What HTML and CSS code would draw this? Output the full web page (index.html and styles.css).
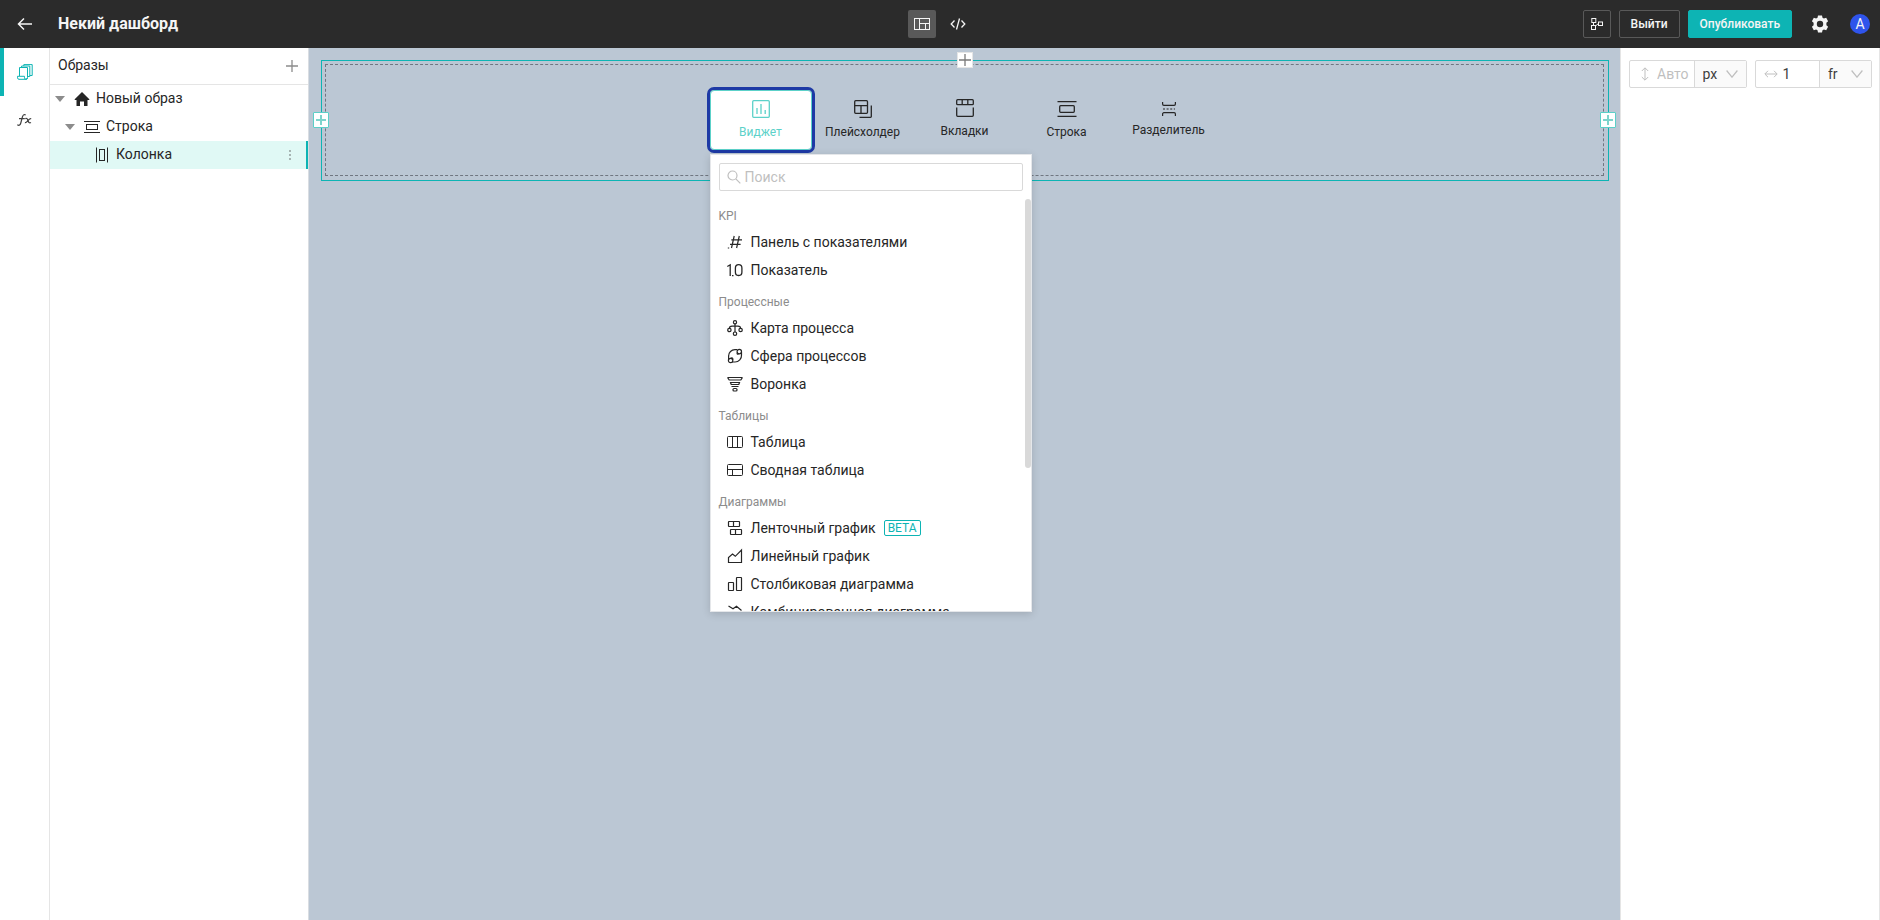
FILE: index.html
```html
<!DOCTYPE html>
<html lang="ru">
<head>
<meta charset="utf-8">
<title>Некий дашборд</title>
<link rel="stylesheet" href="styles.css">
</head>
<body>
<div class="app">
  <header class="topbar">
    <div class="topbar-left">
      <button class="ghost back" aria-label="Назад"><svg width="16" height="14" viewBox="0 0 16 14" fill="none" stroke="currentColor" stroke-width="1.5"><path d="M15 7H2M7 1.500L1.500 7L7 12.500"/></svg></button>
      <h1 class="title">Некий дашборд</h1>
    </div>
    <div class="topbar-center">
      <button class="mode mode-active" aria-label="Макет"><svg width="16" height="12" viewBox="0 0 16 12" fill="none" stroke="currentColor"><rect x=".5" y=".5" width="15" height="11"/><path d="M5.500 .5V11.500M5.500 5.500H15.500M11.500 5.500V11.500"/></svg></button>
      <button class="mode" aria-label="Код"><svg width="16" height="12" viewBox="0 0 16 12" fill="none" stroke="currentColor" stroke-width="1.300"><path d="M4.500 2.500L1.200 6L4.500 9.500M11.500 2.500L14.800 6L11.500 9.500M9.500 .5L6.500 11.500"/></svg></button>
    </div>
    <div class="topbar-right">
      <button class="btn btn-icon" aria-label="Связи"><svg width="12" height="12" viewBox="0 0 12 12" fill="none" stroke="currentColor"><rect x=".8" y=".5" width="4" height="4"/><rect x=".5" y="7.500" width="4" height="4"/><rect x="7.500" y="4" width="4" height="3.500"/><path d="M2.500 4.500V7.500M4.500 8L7.500 5.500"/></svg></button>
      <button class="btn">Выйти</button>
      <button class="btn btn-primary">Опубликовать</button>
      <button class="ghost gear" aria-label="Настройки"><svg width="18" height="18" viewBox="0 0 18 18" fill="currentColor" fill-rule="evenodd"><path d="M7 .5h4l.5 2.300 1.400.8 2.300-.8 1.900 3.400-1.700 1.600v2.400l1.700 1.600-1.900 3.400-2.300-.8-1.400.8-.5 2.300H7l-.5-2.300-1.400-.8-2.300.8-1.900-3.400 1.700-1.600V7.800L.9 6.200l1.900-3.400 2.300.8 1.400-.8zM9 5.800a3.200 3.200 0 1 0 0 6.400a3.200 3.200 0 1 0 0-6.400z"/></svg></button>
      <span class="avatar">A</span>
    </div>
  </header>

  <div class="workspace">
    <nav class="rail">
      <button class="rail-item rail-active" aria-label="Образы"><svg width="16" height="16" viewBox="0 0 16 16" fill="none" stroke="currentColor"><path d="M2.500 12V3.500H10.500V13.500A1.800 1.800 0 0 1 8.700 15.300H2A1.600 1.600 0 0 1 .5 13.800V12.300H7.500V13.800A1.500 1.500 0 0 0 10.500 13.800M4.600 3.500V2H12.800V12.500H10.500M6.800 2V.6H15.200V11.500H12.800"/></svg></button>
      <button class="rail-item" aria-label="Формулы"><svg width="15" height="12" viewBox="0 0 15 12" fill="none" stroke="currentColor" stroke-width="1.200"><path d="M.3 10.800C2.300 12 3.300 11 3.800 9L5.400 3C5.900 1 7 0 8.700 1M2 4.600H7.800M8.300 4.600C10 3.900 10.300 4.800 10.900 6.500S12.200 9.400 14 8.500M14.200 4.600C12.500 4.300 12 5.500 10.900 6.700S9.300 9.100 7.900 8.600"/></svg></button>
    </nav>

    <aside class="outline">
      <div class="outline-head"><span>Образы</span><button class="ghost add" aria-label="Добавить"><svg width="12" height="12" viewBox="0 0 12 12" stroke="currentColor" stroke-width="1.300"><path d="M6 0V12M0 6H12"/></svg></button></div>
      <div class="tree" role="tree">
        <div class="node" role="treeitem"><svg class="caret" width="10" height="6" viewBox="0 0 10 6"><path d="M0 0H10L5 6z" fill="currentColor"/></svg><svg class="home" width="16" height="16" viewBox="0 0 16 16"><path d="M8 1L15.300 8.200V9H13.500V15H10V10.500H6V15H2.500V9H.7V8.200z" fill="currentColor"/></svg><span>Новый образ</span></div>
        <div class="node node-2" role="treeitem"><svg class="caret" width="10" height="6" viewBox="0 0 10 6"><path d="M0 0H10L5 6z" fill="currentColor"/></svg><svg class="row-icon" width="16" height="12" viewBox="0 0 16 12" fill="none" stroke="currentColor"><path d="M0 .5H16M0 11.500H16"/><rect x="2.500" y="3.500" width="11" height="5"/></svg><span>Строка</span></div>
        <div class="node node-3" role="treeitem" aria-selected="true"><svg class="col-icon" width="12" height="16" viewBox="0 0 12 16" fill="none" stroke="currentColor"><path d="M.5 .5V15.500M11.500 .5V15.500"/><rect x="3.500" y="2.500" width="5" height="11"/></svg><span>Колонка</span><button class="ghost more" aria-label="Меню"><svg width="2" height="10" viewBox="0 0 2 10" fill="currentColor"><path d="M0 0h2v2H0zM0 4h2v2H0zM0 8h2v2H0z"/></svg></button></div>
      </div>
    </aside>

    <main class="canvas">
      <section class="row-frame">
        <button class="plus plus-top" aria-label="Добавить строку"><svg width="12" height="12" viewBox="0 0 12 12" stroke="currentColor" stroke-width="1.300"><path d="M6 0V12M0 6H12"/></svg></button>
        <button class="plus plus-left" aria-label="Добавить слева"><svg width="12" height="12" viewBox="0 0 12 12" stroke="currentColor" stroke-width="2"><path d="M6 1V11M1 6H11"/></svg></button>
        <button class="plus plus-right" aria-label="Добавить справа"><svg width="12" height="12" viewBox="0 0 12 12" stroke="currentColor" stroke-width="2"><path d="M6 1V11M1 6H11"/></svg></button>
        <div class="cell">
          <div class="tools">
            <div class="tool-wrap">
              <button class="tool tool-active"><svg width="18" height="18" viewBox="0 0 18 18" fill="none" stroke="currentColor" stroke-width="1.300"><rect x=".7" y=".7" width="16.600" height="16.600" rx="1"/><path d="M5 8V14M9 4V14M13.200 10V14"/></svg>Виджет</button>
              <div class="menu">
                <label class="search"><svg width="14" height="14" viewBox="0 0 14 14" fill="none" stroke="currentColor" stroke-width="1.200"><circle cx="5.500" cy="5.500" r="4.500"/><path d="M8.800 8.800L13.300 13.300"/></svg><input type="text" placeholder="Поиск" aria-label="Поиск"></label>
                <div class="list">
                  <h2>KPI</h2>
                  <button class="entry"><svg width="16" height="16" viewBox="0 0 16 16" fill="none" stroke="currentColor" stroke-width="1.200"><path d="M7.200 2L4.500 14M12.300 2L9.600 14M4.300 5.800H15M3 10.300H13.600M.8 14H2.200"/></svg>Панель с показателями</button>
                  <button class="entry"><svg width="16" height="16" viewBox="0 0 16 16" fill="none" stroke="currentColor" stroke-width="1.300"><path d="M.3 4.500L3.200 2.800V14M5 13.600H6.500"/><rect x="8.400" y="2.700" width="6.500" height="10.800" rx="3.200"/></svg>Показатель</button>
                  <h2>Процессные</h2>
                  <button class="entry"><svg width="16" height="16" viewBox="0 0 16 16" fill="none" stroke="currentColor" stroke-width="1.200"><circle cx="8" cy="2.300" r="1.600"/><circle cx="8" cy="13.700" r="1.700"/><circle cx="2.400" cy="10" r="1.700"/><circle cx="13.600" cy="10" r="1.700"/><path d="M8 4V12M2.400 8.300C2.400 6.700 3.500 6.200 5 6.200H11C12.500 6.200 13.600 6.700 13.600 8.300"/></svg>Карта процесса</button>
                  <button class="entry"><svg width="16" height="16" viewBox="0 0 16 16" fill="none" stroke="currentColor" stroke-width="1.200"><circle cx="12.300" cy="3.600" r="2.200"/><circle cx="3.600" cy="12.500" r="2.200"/><path d="M10.300 1.700H8A6.300 6.300 0 0 0 1.600 8V11.500M14.500 4V7A6.500 6.500 0 0 1 8 14H5M10.300 4.700C9.700 5.900 10.400 6.500 11.800 5.800M3.700 10.300C5 9.500 6.200 10 5.800 11.700"/></svg>Сфера процессов</button>
                  <button class="entry"><svg width="16" height="16" viewBox="0 0 16 16" fill="none" stroke="currentColor" stroke-width="1.200"><path d="M1 1.500H15V2.200L13.800 4H2.200L1 2.200zM3.500 6.500H12.500L11.800 8.500H4.200zM4.500 10.500H11.500"/><rect x="6" y="12.500" width="4" height="2.500" rx="1"/></svg>Воронка</button>
                  <h2>Таблицы</h2>
                  <button class="entry"><svg width="16" height="16" viewBox="0 0 16 16" fill="none" stroke="currentColor"><rect x=".5" y="2.500" width="15" height="11" rx="1"/><path d="M5.500 2.500V13.500M10.500 2.500V13.500"/></svg>Таблица</button>
                  <button class="entry"><svg width="16" height="16" viewBox="0 0 16 16" fill="none" stroke="currentColor"><rect x=".5" y="2.500" width="15" height="11" rx="1"/><path d="M.5 7.500H15.500M5.500 7.500V13.500"/></svg>Сводная таблица</button>
                  <h2>Диаграммы</h2>
                  <button class="entry"><svg width="16" height="16" viewBox="0 0 16 16" fill="none" stroke="currentColor" stroke-width="1.200"><rect x="1.500" y="1.500" width="11" height="5" rx=".5"/><rect x="3.500" y="9.500" width="11" height="5" rx=".5"/><path d="M6.500 1.500V6.500M8.500 9.500V14.500"/></svg>Ленточный график<span class="beta">BETA</span></button>
                  <button class="entry"><svg width="16" height="16" viewBox="0 0 16 16" fill="none" stroke="currentColor" stroke-width="1.200"><path d="M1.500 14.500V9.500L5.500 6L8.300 8.300L14.500 2V14.500z"/></svg>Линейный график</button>
                  <button class="entry"><svg width="16" height="16" viewBox="0 0 16 16" fill="none" stroke="currentColor" stroke-width="1.200"><rect x="1.500" y="6.500" width="5" height="8" rx=".5"/><rect x="9.500" y="1.500" width="5" height="13" rx=".5"/></svg>Столбиковая диаграмма</button>
                  <button class="entry"><svg width="16" height="16" viewBox="0 0 16 16" fill="none" stroke="currentColor" stroke-width="1.200"><path d="M1.500 2L6 4.800L9.500 2.200L14.500 6.500M1.500 14.500V9H5.500V14.500zM9.500 14.500V9H14.500V14.500z"/></svg>Комбинированная диаграмма</button>
                </div>
                <span class="thumb"></span>
              </div>
            </div>
            <button class="tool"><svg width="18" height="18" viewBox="0 0 18 18" fill="none" stroke="currentColor" stroke-width="1.300"><rect x=".7" y=".7" width="12.800" height="12.600" rx="1"/><path d="M.7 5.700H13.500M7 5.700V13.300M17.300 5.500V16.500A.8 .8 0 0 1 16.500 17.300H5.500"/></svg>Плейсхолдер</button>
            <button class="tool tool-tight"><svg width="18" height="18" viewBox="0 0 18 18" fill="none" stroke="currentColor" stroke-width="1.300"><rect x=".7" y=".7" width="16.600" height="5" rx="1"/><path d="M6.200 .7V5.700M11.800 .7V5.700M.7 8.500V16.300A1 1 0 0 0 1.700 17.300H16.300A1 1 0 0 0 17.300 16.300V8.500"/></svg>Вкладки</button>
            <button class="tool"><svg width="20" height="18" viewBox="0 0 20 18" fill="none" stroke="currentColor" stroke-width="1.300"><path d="M.5 1.700H19.500M.5 16.300H19.500"/><rect x="2.700" y="5.700" width="14.600" height="6.600" rx="1"/></svg>Строка</button>
            <button class="tool"><svg width="14" height="14" viewBox="0 0 14 14" fill="none" stroke="currentColor" stroke-width="1.200"><path d="M.6 0V2A1.300 1.300 0 0 0 1.900 3.300H12.100A1.300 1.300 0 0 0 13.400 2V0M.6 14V12A1.300 1.300 0 0 1 1.900 10.700H12.100A1.300 1.300 0 0 1 13.400 12V14"/><path d="M1 7H13" stroke-dasharray="2 1.600"/></svg>Разделитель</button>
          </div>
        </div>
      </section>
    </main>

    <aside class="props">
      <div class="size">
        <label class="size-field"><svg width="8" height="14" viewBox="0 0 8 14" fill="none" stroke="currentColor"><path d="M4 1V13M.8 4L4 .8L7.200 4M.8 10L4 13.200L7.200 10"/></svg><input type="text" placeholder="Авто" aria-label="Высота"></label>
        <div class="unit"><select aria-label="Единица высоты"><option>px</option><option>fr</option></select><svg width="12" height="8" viewBox="0 0 12 8" fill="none" stroke="currentColor" stroke-width="1.200"><path d="M.6 .5L6 7.200L11.400 .5"/></svg></div>
      </div>
      <div class="size">
        <label class="size-field"><svg width="14" height="8" viewBox="0 0 14 8" fill="none" stroke="currentColor"><path d="M1 4H13M4 .8L.8 4L4 7.200M10 .8L13.200 4L10 7.200"/></svg><input type="text" value="1" aria-label="Ширина"></label>
        <div class="unit"><select aria-label="Единица ширины"><option>fr</option><option>px</option></select><svg width="12" height="8" viewBox="0 0 12 8" fill="none" stroke="currentColor" stroke-width="1.200"><path d="M.6 .5L6 7.200L11.400 .5"/></svg></div>
      </div>
    </aside>
  </div>
</div>
</body>
</html>
```

FILE: styles.css
```css
* { box-sizing: border-box; }
body { margin: 0; font: 14px/20px Roboto, "Noto Sans", sans-serif; color: #262626; }
button, input, select { font: inherit; color: inherit; margin: 0; }
button { border: 0; padding: 0; background: none; cursor: pointer; }
svg { display: block; flex: none; }
.app { display: flex; flex-direction: column; min-height: 100vh; }

.topbar { display: grid; grid-template-columns: 1fr auto 1fr; align-items: center; height: 48px; background: #2b2b2b; color: #f5f5f5; }
.topbar-left { display: flex; align-items: center; }
.ghost { display: flex; align-items: center; justify-content: center; }
.back { width: 50px; height: 48px; }
.title { margin: 0 0 0 8px; font-size: 16px; line-height: 24px; font-weight: 700; }
.topbar-center { display: flex; gap: 8px; }
.mode { display: flex; align-items: center; justify-content: center; width: 28px; height: 28px; border-radius: 2px; }
.mode-active { background: #595959; }
.topbar-right { display: flex; justify-content: flex-end; align-items: center; gap: 8px; padding-right: 10px; }
.btn { height: 28px; padding: 0 11px; border: 1px solid #595959; border-radius: 2px; font-size: 12px; font-weight: 500; }
.btn-icon { width: 28px; padding: 0 7px; }
.btn-primary { border-color: #0db4b4; background: #0db4b4; }
.gear { width: 40px; height: 28px; }
.avatar { width: 20px; height: 20px; margin-left: 2px; border-radius: 50%; background: #2f54eb; text-align: center; }

.workspace { display: flex; flex: 1; }
.rail { flex: none; width: 50px; border-right: 1px solid #e5e5e5; }
.rail-item { display: flex; align-items: center; justify-content: center; width: 49px; height: 48px; color: #404040; }
.rail-active { padding-right: 4px; border-left: 4px solid #0db4b4; color: #0db4b4; }

.outline { flex: none; width: 259px; border-right: 1px solid #d9dde2; }
.outline-head { display: flex; align-items: center; justify-content: space-between; height: 37px; padding: 0 10px 0 8px; border-bottom: 1px solid #e5e5e5; }
.outline-head span, .node span { padding-bottom: 2px; }
.add { color: #8c8c8c; }
.node { display: flex; align-items: center; height: 28px; padding-left: 5px; }
.node-2 { padding-left: 15px; }
.node-3 { padding-left: 46px; border-right: 2px solid #0db4b4; background: #e0f9f5; }
.caret { color: #8c8c8c; }
.home { margin: 0 6px 0 9px; }
.row-icon { margin: 0 6px 0 9px; }
.col-icon { margin-right: 8px; }
.more { margin-left: auto; width: 32px; height: 28px; color: #a6b5b3; }

.canvas { flex: 1; min-width: 0; padding: 12px 11px 12px 12px; background: #bbc7d4; }
.row-frame { position: relative; padding: 3px 4px 4px 3px; border: 1px solid #0db4b4; }
.cell { display: flex; justify-content: center; padding: 25px 0; border: 1px dashed #707680; }
.plus { position: absolute; z-index: 1; display: flex; align-items: center; justify-content: center; width: 16px; height: 16px; background: #fff; }
.plus-top { top: -9px; left: calc(50% - 8px); border: 1px solid #e5e5e5; color: #7a7a7a; }
.plus-left, .plus-right { top: calc(50% - 9px); border: 1px solid #5ccfc8; border-radius: 1px; color: #7dd4cc; }
.plus-left { left: -9px; }
.plus-right { right: -8px; }

.tools { display: flex; }
.tool-wrap { position: relative; }
.tool { display: flex; flex-direction: column; align-items: center; justify-content: center; gap: 4px; width: 102px; height: 60px; padding-top: 2px; font-size: 12px; }
.tool-tight { padding-top: 0; }
.tool-active { border: 1px solid #5cd1c9; border-radius: 4px; outline: 3px solid #1d39a5; background: #fff; color: #5cd1c9; }

.menu { position: absolute; z-index: 2; top: 64px; left: 0; width: 322px; padding: 8px 0 0; border: 1px solid #e5e7ea; background: #fff; box-shadow: 0 2px 8px rgba(0, 0, 0, .15); }
.search { display: flex; align-items: center; gap: 4px; height: 28px; margin: 0 8px; padding: 0 7px; border: 1px solid #d9d9d9; border-radius: 2px; color: #bfbfbf; }
.search input { flex: 1; min-width: 0; padding: 0; border: 0; outline: 0; background: none; }
input::placeholder { color: #bfbfbf; opacity: 1; }
.list { height: 413px; margin-top: 7px; overflow-y: auto; scrollbar-width: none; }
.list h2 { margin: 0; padding: 8px 8px 2px; font-size: 12px; line-height: 20px; font-weight: 400; color: #8c8c8c; }
.entry { display: flex; align-items: center; gap: 8px; width: 100%; height: 28px; padding: 0 16px; white-space: nowrap; }
.beta { height: 16px; padding: 0 3px; border: 1px solid #0db4b4; border-radius: 2px; font-size: 12px; line-height: 14px; color: #0db4b4; }
.thumb { position: absolute; top: 44px; right: 0; width: 6px; height: 269px; border-radius: 3px; background: #d9d9d9; }

.props { flex: none; display: flex; align-items: flex-start; gap: 8px; width: 260px; padding: 12px 7px 0 8px; border-left: 1px solid #e5e5e5; border-right: 1px solid #e5e5e5; }
.size { flex: 1; display: flex; height: 28px; border: 1px solid #d9d9d9; border-radius: 2px; }
.size-field { flex: 1; display: flex; align-items: center; justify-content: center; min-width: 0; padding-left: 8px; color: #bfbfbf; }
.size-field svg { width: 14px; }
.size-field input { flex: 1; min-width: 0; width: 20px; padding: 0 0 0 5px; border: 0; outline: 0; background: none; color: #404040; }
.unit { position: relative; width: 52px; border-left: 1px solid #d9d9d9; background: #fafafa; }
.unit select { appearance: none; width: 100%; height: 26px; padding: 0 8px; border: 0; background: none; color: #404040; }
.unit svg { position: absolute; top: 9px; right: 8px; color: #bfbfbf; pointer-events: none; }
```
